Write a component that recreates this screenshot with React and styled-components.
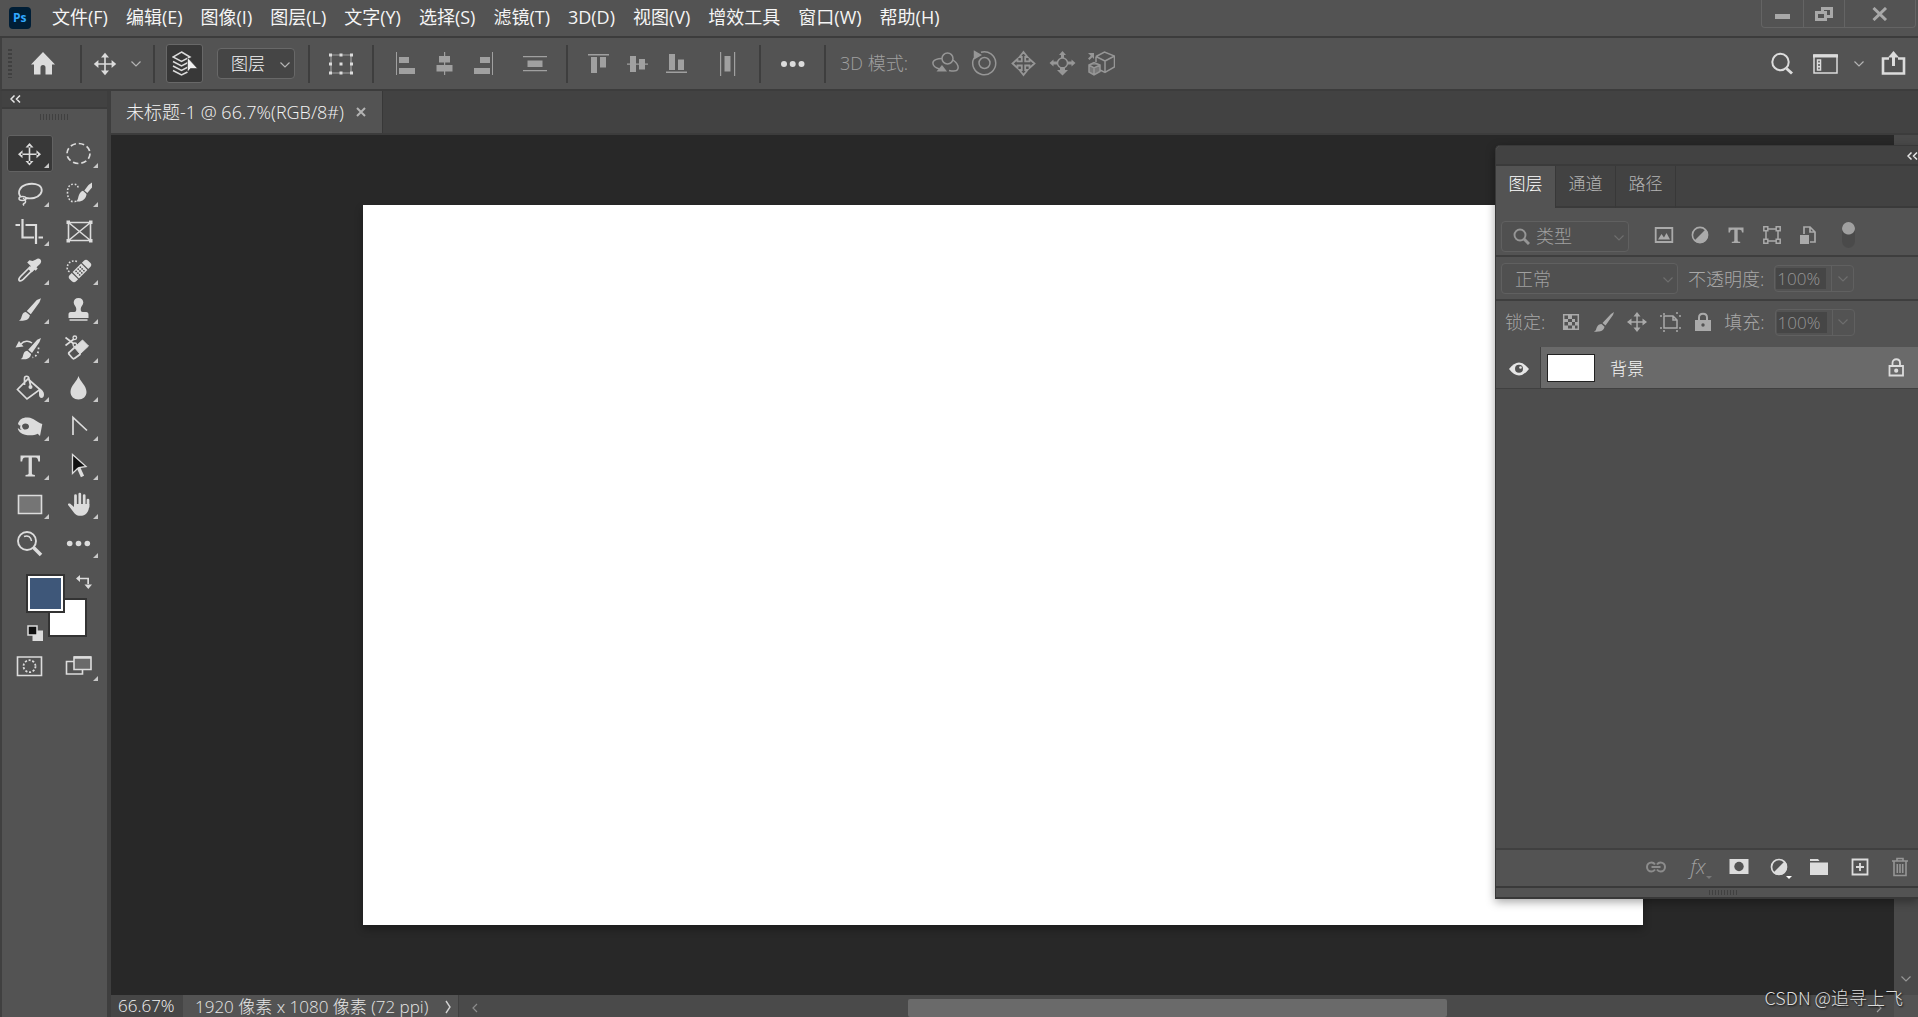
import React from 'react';
import styled, { createGlobalStyle } from 'styled-components';

const sans = `'Open Sans', 'Noto Sans CJK SC', sans-serif`;

const menus = ['文件(F)', '编辑(E)', '图像(I)', '图层(L)', '文字(Y)', '选择(S)', '滤镜(T)', '3D(D)', '视图(V)', '增效工具', '窗口(W)', '帮助(H)'];

const Chevron = ({ color = '#b4b4b4' }) => (
    <svg width="10" height="6" viewBox="0 0 10 6" fill="none" stroke={color} strokeWidth="1.2"><path d="M.5.5 5 5 9.5.5" /></svg>
);

const DoubleChevron = () => (
    <svg width="11" height="8" viewBox="0 0 11 8" fill="none" stroke="#e6e6e6" strokeWidth="1.5"><path d="M4.5.5 1 4l3.500 3.500M10 .5 6.500 4 10 7.500" /></svg>
);

const MoveIcon = ({ size = 24, color = '#dcdcdc' }) => (
    <svg width={size} height={size} viewBox="0 0 24 24" fill={color}>
        <path d="M11.200 3h1.600v18h-1.600zM3 11.200h18v1.600H3z" />
        <path d="M12 .8 16 5.400H8zM12 23.200 8 18.600h8zM.8 12 5.400 8v8zM23.200 12 18.600 16V8z" />
    </svg>
);

/* tool drawings, each on a 46 x 37 button */
const tools = [
    { name: '移动工具', active: true, more: true, art: <path d="M21.700 11v17h1.600V11zM14 18.500v1.600h17v-1.600zM22.500 8l4 4.500h-8zM22.500 30.500l-4-4.500h8zM11 19.300l4.500-4v8zM34 19.300l-4.500 4v-8z" fill="#dcdcdc" /> },
    { name: '椭圆选框工具', more: true, art: <ellipse cx="22.500" cy="18.500" rx="11.500" ry="10" strokeDasharray="5.500 2.950" strokeWidth="1.700" /> },
    { name: '套索工具', more: true, art: <><path d="M13.500 22.500c-3.500-4.500-.5-10 5.500-11.800 6.500-2 13.500-.7 15.300 3.300 1.700 4.300-1.800 8.800-7.300 10-3 .7-6 .5-8.500 0" strokeWidth="1.800" /><ellipse cx="15.500" cy="24.500" rx="3.500" ry="2" strokeWidth="1.500" /><path d="M16 24c3 2 3.500 4.500 1 5.500-1 .5-1 1 0 2" strokeWidth="1.500" /></> },
    { name: '快速选择工具', more: true, art: <><path d="M22 13.500c0-2-1.500-3.300-4.500-3.300-4 0-6 3-6 8s2 9.500 6 9.500c1.500 0 2.500-.3 3-.8" strokeWidth="1.600" strokeDasharray="1.700 1.700" /><path d="M36 8.500v5L31.300 19l-3-2.600 4.200-5.400zM27 16.800l3.500 3.200c-.3 5-4.500 7.700-8.500 7.500-1 0-1.500 0-2-.5 2.300-.7 1.800-3 3-6 .8-2.200 2.200-3.700 4-4.200z" fill="#dcdcdc" stroke="none" /></> },
    { name: '裁剪工具', more: true, art: <><path d="M15.500 6v18.500H27M8.500 12h4.500M18.500 12H29v19M31.500 24.500h4.500" strokeWidth="2.200" /></> },
    { name: '图框工具', art: <><path d="M12.500 9.500h22v18h-22zM12.500 9.500l22 18M34.500 9.500l-22 18" strokeWidth="1.600" /><path d="M10.500 7.500h3.500V11h-3.500zM33 7.500h3.500V11H33zM10.500 26h3.500v3.500h-3.500zM33 26h3.500v3.500H33z" fill="#dcdcdc" stroke="none" /></> },
    { name: '吸管工具', more: true, art: <><path d="M23.500 14.500l-10 10c-1.800 2-2.200 2.800-1.300 4 1.300 1 2.200.5 4-1.200l10-10" strokeWidth="1.700" /><path d="M29 7.500c2-1.800 4.500-.8 5 1 .4 1.300-.1 2.500-1 3.500l-3.500 3.200 1.200 1.200-2 2.300-1.200-1-2.800 2.800-3.500-3.500 2.800-2.700-3.800-3.800 2.200-2.200 3.200.8z" fill="#dcdcdc" stroke="none" /></> },
    { name: '污点修复画笔工具', more: true, art: <><path d="M21 9.500c-6-2-11 2-9.500 9l2.500 1.500" strokeWidth="1.600" strokeDasharray="1.700 1.700" /><g transform="rotate(-45 24 19)" fill="#dcdcdc" stroke="none"><path d="M14 14.500h2.800v9H14q-3 0-3-3v-3q0-3 3-3zM31.200 14.500H34q3 0 3 3v3q0 3-3 3h-2.800zM18 14.500h12v9H18z" /><g fill="#535353"><circle cx="21" cy="16.500" r=".9" /><circle cx="24" cy="16.500" r=".9" /><circle cx="27" cy="16.500" r=".9" /><circle cx="21" cy="19" r=".9" /><circle cx="24" cy="19" r=".9" /><circle cx="27" cy="19" r=".9" /><circle cx="21" cy="21.500" r=".9" /><circle cx="24" cy="21.500" r=".9" /><circle cx="27" cy="21.500" r=".9" /></g></g></> },
    { name: '画笔工具', more: true, art: <path d="M34 7.300l-1.500 4-8.700 12-4-3.300 10-11zM18.900 21l4 3.300c-.5 4-3.900 5.200-7 5.400-1.500.1-3 .1-4.100-.2 2.500-1 2.200-2.500 3.300-5.300.7-2 2.200-3.200 3.800-3.200z" fill="#dcdcdc" stroke="none" /> },
    { name: '仿制图章工具', more: true, art: <><path d="M22.500 7c3 0 4.800 2 4.800 4.500 0 2.800-2.600 4-2.600 6.500 0 2 .5 3 2 3h3.500c1.500 0 2.300 1 2.300 2.500V27h-20v-3.500c0-1.500.8-2.500 2.300-2.500h3.500c1.500 0 2-1 2-3 0-2.500-2.600-3.700-2.600-6.500C17.700 9 19.500 7 22.500 7zM13.500 28.200h18v1.600h-18z" fill="#dcdcdc" stroke="none" /></> },
    { name: '历史记录画笔工具', more: true, art: <><path d="M34 8l-1.500 4-7.500 11-3.800-3.300 9-10zM20.300 20.700l3.800 3.300c-.5 4-3.500 5-6.500 5.300-1.500.1-3 .1-4.100-.2 2.500-1 2-2.500 3-5.200.7-2 2.200-3.200 3.800-3.200z" fill="#dcdcdc" stroke="none" /><path d="M14 14c3-3.500 8-3.500 11-1" strokeWidth="1.600" /><path d="M8.500 17.500l3.500-6.500 4.500 5.500z" fill="#dcdcdc" stroke="none" /><path d="M31.500 17.500c.5 4-1.500 9-6 10" strokeWidth="1.700" strokeDasharray="1.700 2.300" /></> },
    { name: '橡皮擦工具', more: true, art: <><path d="M9.500 7.500l8.500 6.500M9.500 15.500l8.500-6.500" strokeWidth="1.600" /><circle cx="18.800" cy="7.800" r="1.800" strokeWidth="1.300" /><circle cx="18.800" cy="14.800" r="1.800" strokeWidth="1.300" /><path d="M26.500 10l6 6-8.500 8-5.500-6.500z" fill="#dcdcdc" strokeLinejoin="round" /><path d="M18.500 17.500l-5.200 4.800c-.8.7-.8 1.400 0 2.200l3 3.500c.8.900 1.700 1 2.500.2l5.700-4.200" strokeWidth="1.800" /></> },
    { name: '油漆桶工具', more: true, art: <><path d="M21 10l12 10.500L20 30 10.500 20.500zM17.500 16V9.500c0-3 4-3 4.500 0l1.500 7" strokeWidth="1.700" /><circle cx="23.500" cy="18" r="2" fill="#dcdcdc" stroke="none" /><path d="M32 19.500c2.500.5 5 3 5 6 0 2-1 3.500-2.500 3.500S32 27.500 32 25.500z" fill="#dcdcdc" stroke="none" /></> },
    { name: '模糊工具', more: true, art: <path d="M22.500 7c1.500 5.500 8 9.500 8 16 0 4.500-3.500 7.500-8 7.500s-8-3-8-7.500c0-6.500 6.500-10.500 8-16z" fill="#dcdcdc" stroke="none" /> },
    { name: '海绵工具', more: true, art: <path d="M11 15.500c1.500-4.500 5.500-6.500 10-6 6 .5 8.500 4.500 14.300 6.500L33 28l-2.300-2.300c-3.700 2-8.700 2-12.700 1-4-.8-7-3.500-7.200-6.700 1.200 1.200 2.500 2 4.200 2-2.200-1-2.200-2.500-1.500-4.500-1 .2-2-.5-2.500-2zM18.300 15.500c-1.800 0-3 1-3.300 2.500.3 2.500 1.700 3.600 3.500 3.600s3.500-1.300 3.500-3.100c0-1.800-1.500-3-3.700-3z" fill="#dcdcdc" fillRule="evenodd" stroke="none" /> },
    { name: '钢笔工具', more: true, art: <path d="M17 27V9.500l14 13" strokeWidth="1.700" /> },
    { name: '文字工具', more: true, art: <path d="M13.500 8.500h19.500v6h-1.700c-.3-2.900-1-4-3-4h-3.400v15.700c0 1.200.6 1.700 3 1.700v1.600H18.500v-1.600c2.500 0 3.100-.5 3.100-1.700V10.500h-3.400c-2 0-2.700 1.100-3 4h-1.700z" fill="#dcdcdc" stroke="none" /> },
    { name: '选择工具', more: true, art: <><path d="M22 19.500l4.500 10" strokeWidth="3.500" /><path d="M16.500 7.500v19l5-5 1.500-1 7-1z" fill="#111" strokeWidth="1.300" /></> },
    { name: '矩形工具', more: true, art: <path d="M11.500 9.500h23v18h-23z" fill="#757575" strokeWidth="1.600" /> },
    { name: '抓手工具', more: true, art: <><path d="M19.500 9.500v10M23.800 8v11M28.200 9.500v10M32 14v7" strokeWidth="2.700" strokeLinecap="round" /><path d="M18 18h15.300c0 6-1.800 11.800-9 11.800-4 0-6-2.300-8-5.300l-4-5.200c-1-1.500.6-2.400 2-1.500l3.700 3.200z" fill="#dcdcdc" stroke="none" /></> },
    { name: '缩放工具', art: <><circle cx="20" cy="16" r="9" strokeWidth="1.900" /><path d="M26.500 22.500l7.500 7.500" strokeWidth="3.500" /><path d="M17 11.500c4-1.500 7 .5 7.500 4.500" strokeWidth="1.500" /></> },
    { name: '编辑工具栏', more: true, art: <g fill="#dcdcdc" stroke="none"><circle cx="13.700" cy="18.500" r="2.800" /><circle cx="22.500" cy="18.500" r="2.800" /><circle cx="31.300" cy="18.500" r="2.800" /></g> },
];

const viewTools = [
    { name: '快速蒙版', art: <><path d="M10.500 9h24v18.500h-24z" strokeWidth="1.600" /><circle cx="22.500" cy="18.200" r="6" strokeWidth="1.800" strokeDasharray="2.100 1.700" /></> },
    { name: '屏幕模式', more: true, art: <><path d="M10.500 13.500h16v12.500h-16z" strokeWidth="1.600" /><path d="M18 9h17v12.500H18z" fill="#6a6a6a" strokeWidth="1.600" /><path d="M18 9.500h17" strokeWidth="2.500" /></> },
];

function ToolButton({ tool }) {
    return (
        <Tool type="button" aria-label={tool.name} $active={tool.active}>
            <svg width="46" height="37" viewBox="0 0 46 37" fill="none" stroke="#dcdcdc">
                <g stroke={tool.active ? 'none' : '#dcdcdc'}>{tool.art}</g>
                {tool.more && <path d="M42 28v5h-5z" fill="#c8c8c8" stroke="none" />}
            </svg>
        </Tool>
    );
}

const alignIcons = [
    { name: '左对齐', art: <path d="M2 0h1v23H2zM5 5h10v6H5zM5 16h16v6H5z" /> },
    { name: '水平居中对齐', art: <path d="M11 0h1.200v23H11zM6 4h11v6.500H6zM3.500 13h16v6.500h-16z" /> },
    { name: '右对齐', art: <path d="M20 0h1v23h-1zM8 5h10v6H8zM2 16h16v6H2z" /> },
    { name: '垂直分布', last: true, art: <path d="M0 4h24v1.300H0zM0 18h24v1.300H0zM4.500 8.500h15v6.500h-15z" /> },
];

const topIcons = [
    { name: '顶对齐', art: <path d="M1 2h21v1.500H1zM4 5h6v16H4zM13 5h6v10.500h-6z" /> },
    { name: '垂直居中对齐', art: <path d="M1 11.500h21v1.200H1zM4 4h6v16H4zM13 7h6v10.500h-6z" /> },
    { name: '底对齐', art: <path d="M1 19.500h21V21H1zM4 2h6v16H4zM13 7.500h6V18h-6z" /> },
    { name: '水平分布', last: true, art: <path d="M4 0h1.200v24H4zM18 0h1.200v24H18zM8.500 4h6v15.500h-6z" /> },
];

const modeIcons = [
    { name: '环绕移动 3D 相机', art: <><circle cx="15.500" cy="8.500" r="5.500" /><path d="M10 8.500C5.500 8.500.8 10 .9 13c.1 3 3 5 6.500 6M21 10c4 3 6 6.500 4.700 9.300-1 2.200-5 2-8.700 1.200" /><path d="M4.500 21.500 10 15l5 6.500z" fill="#969696" stroke="none" /></> },
    { name: '滚动 3D 相机', art: <><circle cx="13.500" cy="13" r="5.500" /><path d="M10 2.200a11.500 11.500 0 1 1-7 5.800" /><path d="M3.500 1.500v7l6-3.500z" fill="#969696" /></> },
    { name: '平移 3D 相机', art: <path d="M13.500 2l4 5h-2.300v4.300h4.300V9l5 4.500-5 4.500v-2.500h-4.300v4.500h2.300l-4 5-4-5h2.300v-4.500H7.500V18l-5-4.500 5-4.500v2.300h4.300V7H9.500z" strokeWidth="1.800" /> },
    { name: '滑动 3D 相机', art: <><circle cx="13.500" cy="13" r="5" /><path d="M13.500 1l3.500 4h-2v3h-3V5h-2zM13.500 25.500 8 20h3v-3h5v3h3zM.5 13l4-3.500v2h4.500v3H4.500v2zM26.500 13l-4-3.500v2H18v3h4.500v2z" fill="#969696" stroke="none" /></> },
    { name: '变焦 3D 相机', art: <><path d="M8 6.500 16.500 2l10 4v11l-9.500 5.500L12 20M8 6.500 17 11v11.500M17 11l9.500-5M8 6.500V12" /><path d="M1 15l5-2.500 6 2.500v6.500L6 25l-5-3zM1 15l5 3 6-3M6 18v7" fill="#787878" /><path d="M0 3h6v6L4.300 7.300 1.500 10 0 8.500l2.800-2.800z" fill="#969696" stroke="none" /></> },
];

const filterIcons = [
    { name: '像素图层', art: <><path d="M1.700 3h16.600v14H1.700z" strokeWidth="1.800" /><path d="M4 14.500 7.500 9l2.500 3.500L12.500 8l3.500 6.500z" fill="#aaa" stroke="none" /></> },
    { name: '调整图层', art: <><circle cx="10" cy="10" r="7.600" strokeWidth="1.600" /><path d="M15.700 4.300A8 8 0 0 1 4.300 15.700z" fill="#aaa" stroke="none" /></> },
    { name: '文字图层', art: <path d="M2.500 2.500h15v5H16c-.2-2-.8-2.700-2.500-2.700h-1.800v10.400c0 1.300.5 1.600 2.500 1.600V18H5.800v-1.200c2 0 2.500-.3 2.500-1.600V4.800H6.500C4.800 4.800 4.200 5.500 4 7.500H2.500z" fill="#aaa" stroke="none" /> },
    { name: '形状图层', art: <path d="M4 6v8M16 6v8M6 4h8M6 16h8M1.800 1.800h4v4h-4zM14.200 1.800h4v4h-4zM1.800 14.200h4v4h-4zM14.200 14.200h4v4h-4z" strokeWidth="1.500" /> },
    { name: '智能对象', art: <><path d="M6 9V2h6l5 5v10h-5M12 2v5h5" strokeWidth="1.700" /><path d="M2 10h9v9H2z" fill="#aaa" stroke="none" /></> },
];

const lockIcons = [
    { name: '锁定透明像素', art: <><path d="M2.700 2.700h14.600v14.600H2.700z" strokeWidth="1.500" /><path d="M7 3h4v4H7zM3 7h4v3H3zM11 7h3v3h-3zM7 10h4v3.500H7zM14 10h3v3.500h-3zM3 13.500h4V17H3zM11 13.500h3V17h-3z" fill="#aaa" stroke="none" /></> },
    { name: '锁定图像像素', art: <path d="M20 0l-1 3-7.500 10.500-3-2.500L17 2zM7.500 12l3 2.700C10 18 7 19.500 4 19.500c-1.500.2-2.500.3-4 0 2.500-1 1.800-2 3-4.500.8-2 2.500-3 4.500-3z" fill="#aaa" stroke="none" /> },
    { name: '锁定位置', art: <path d="M9.300 2h1.500v16H9.300zM2 9.300h16v1.500H2zM10 0l3.500 4.500h-7zM10 20l-3.500-4.500h7zM0 10l4.500-3.500v7zM20 10l-4.500 3.500v-7z" fill="#aaa" stroke="none" /> },
    { name: '防止自动嵌套', art: <path d="M4 1v2M0 4h2M4 4h9l4 4v8H4zM13 4v4h4M17 0v2M19 4h2M4 18v2M0 16h2M17 18v2M19 16h2" strokeWidth="1.500" /> },
    { name: '全部锁定', art: <><path d="M6 9V5.500C6 .5 14 .5 14 5.500V9" strokeWidth="2" /><path d="M2 8h16v11H2z" fill="#aaa" stroke="none" /><circle cx="10" cy="13" r="1.700" fill="#535353" stroke="none" /></> },
];

function App() {
    return (
        <>
            <GlobalStyle />
            <Window>
                <TitleBar>
                    <Logo viewBox="0 0 22 22" role="img" aria-label="Photoshop">
                        <rect width="22" height="22" rx="4" fill="#001e36" />
                        <text x="4" y="15" fontSize="12" fontWeight="700" fontFamily="Open Sans, sans-serif" fill="#31a8ff">Ps</text>
                    </Logo>
                    <MenuBar>
                        {menus.map((menu) => <MenuItem key={menu} type="button">{menu}</MenuItem>)}
                    </MenuBar>
                    <WindowButtons>
                        <WindowButton type="button" aria-label="最小化" $width={41}>
                            <svg width="16" height="16"><path d="M0 8h15v5H0z" fill="#a8a8a8" /></svg>
                        </WindowButton>
                        <WindowButton type="button" aria-label="还原" $width={41}>
                            <svg width="18" height="16" fill="none" stroke="#a8a8a8" strokeWidth="3"><path d="M7.500 5V2.500h9v8H12" /><path d="M1.500 6.500h9v7h-9z" /></svg>
                        </WindowButton>
                        <WindowButton type="button" aria-label="关闭" $width={71}>
                            <svg width="16" height="14" fill="none" stroke="#a8a8a8" strokeWidth="3"><path d="M1.500 1l12.500 12M14 1 1.500 13" /></svg>
                        </WindowButton>
                    </WindowButtons>
                </TitleBar>

                <OptionsBar>
                    <HomeGroup>
                        <BarGrip />
                        <PlainButton type="button" aria-label="主页">
                            <svg width="24" height="24" fill="#dcdcdc"><path d="M12 0 24 12.500h-3V22.500h-6.500v-7a2 2 0 0 0-5 0v7H3v-10H0z" /></svg>
                        </PlainButton>
                    </HomeGroup>
                    <Group $left={11} $right={12} $gap={14}>
                        <PlainButton type="button" aria-label="移动工具"><MoveIcon /></PlainButton>
                        <PlainButton type="button" aria-label="工具预设"><Chevron /></PlainButton>
                    </Group>
                    <Group $left={11} $right={13} $gap={14}>
                        <AutoSelect type="button" aria-label="自动选择">
                            <svg width="26" height="28" fill="none" stroke="#dcdcdc" strokeWidth="1.500">
                                <path d="M9.500 2 18 7l-8.500 4.500L1 7zM1 11.500l8.500 4.500 8.500-4.500M1 16l8.500 4.500L18 16M1 20.500 9.500 25l6-3" />
                                <path d="M15.500 7.500v14.500l3-3.500h7z" fill="#f0f0f0" stroke="#383838" strokeWidth=".6" />
                            </svg>
                        </AutoSelect>
                        <SelectWrap $width={78}>
                            <Select aria-label="自动选择目标" $bright><option>图层</option></Select>
                            <Arrow><Chevron /></Arrow>
                        </SelectWrap>
                    </Group>
                    <Group $left={18} $right={18}>
                        <PlainButton type="button" aria-label="显示变换控件">
                            <svg width="26" height="24" fill="#dcdcdc">
                                <path d="M3 3h20v18H3z" fill="none" stroke="#a0a0a0" strokeWidth="1.200" />
                                <path d="M1 1.500h3v3H1zM11.500 1.500h3v3h-3zM22 1.500h3v3h-3zM1 10.500h3v3H1zM11.500 10.500h3v3h-3zM22 10.500h3v3h-3zM1 19.500h3v3H1zM11.500 19.500h3v3h-3zM22 19.500h3v3h-3z" />
                            </svg>
                        </PlainButton>
                    </Group>
                    <Group $left={20} $right={19} $gap={15}>
                        {alignIcons.map((icon) => (
                            <AlignButton key={icon.name} type="button" aria-label={icon.name} $last={icon.last}>
                                <svg width="24" height="24" fill="#a0a0a0">{icon.art}</svg>
                            </AlignButton>
                        ))}
                    </Group>
                    <Group $left={19} $right={19} $gap={15}>
                        {topIcons.map((icon) => (
                            <AlignButton key={icon.name} type="button" aria-label={icon.name} $last={icon.last}>
                                <svg width="24" height="24" fill="#a0a0a0">{icon.art}</svg>
                            </AlignButton>
                        ))}
                    </Group>
                    <Group $left={19} $right={18}>
                        <PlainButton type="button" aria-label="更多对齐选项">
                            <svg width="26" height="24" fill="#dcdcdc"><circle cx="4" cy="12" r="3" /><circle cx="12.700" cy="12" r="3" /><circle cx="21.500" cy="12" r="3" /></svg>
                        </PlainButton>
                    </Group>
                    <Group $left={14} $right={0} $gap={12}>
                        <ModeLabel>3D 模式:</ModeLabel>
                        {modeIcons.map((icon) => (
                            <PlainButton key={icon.name} type="button" aria-label={icon.name}>
                                <svg width="27" height="27" fill="none" stroke="#969696" strokeWidth="1.500">{icon.art}</svg>
                            </PlainButton>
                        ))}
                    </Group>
                    <RightGroup>
                        <PlainButton type="button" aria-label="搜索">
                            <svg width="22" height="24" fill="none" stroke="#dcdcdc"><circle cx="9.500" cy="10" r="8.200" strokeWidth="2" /><path d="M15.500 16.500l5.500 5" strokeWidth="3" /></svg>
                        </PlainButton>
                        <WorkspaceButton type="button" aria-label="选择工作区">
                            <svg width="26" height="24" fill="none" stroke="#dcdcdc"><path d="M1 3h23v18H1z" strokeWidth="1.500" /><path d="M0 4h25" strokeWidth="3" /><path d="M4.500 8h3v10h-3zM4.500 11.300h3M4.500 14.700h3" strokeWidth="1.500" /></svg>
                            <Chevron />
                        </WorkspaceButton>
                        <PlainButton type="button" aria-label="共享">
                            <svg width="26" height="26" fill="none" stroke="#dcdcdc"><path d="M8 7.500H2v15h21v-15H17" strokeWidth="2.600" /><path d="M12.500 5v10" strokeWidth="3" /><path d="M12.500 0 18 6.500H7z" fill="#dcdcdc" stroke="none" /></svg>
                        </PlainButton>
                    </RightGroup>
                </OptionsBar>

                <Body>
                    <Palette>
                        <PaletteHeader><PlainButton type="button" aria-label="折叠"><DoubleChevron /></PlainButton></PaletteHeader>
                        <PaletteGrip><Ticks $height={6} /></PaletteGrip>
                        <ToolGrid>
                            {tools.map((tool) => <ToolButton key={tool.name} tool={tool} />)}
                        </ToolGrid>
                        <Swatches>
                            <Swatch type="button" aria-label="背景色" $x={39} $y={36} $color="#fff" />
                            <Swatch type="button" aria-label="前景色" $x={17} $y={12} $color="#3e5779" $ring />
                            <SwatchIcon type="button" aria-label="切换颜色" $x={67} $y={12}>
                                <svg width="17" height="16" fill="#dcdcdc"><path d="M4 3.700h9V10h-1.700V5.300H4z" /><path d="M0 4.500 4 1v7zM8.500 10.500h7.500l-3.700 4.500z" /></svg>
                            </SwatchIcon>
                            <SwatchIcon type="button" aria-label="默认颜色" $x={18} $y={63}>
                                <svg width="17" height="17"><path d="M5.500 5.500H16V16H5.500z" fill="#dcdcdc" /><path d="M1 1h9v9H1z" fill="#111" stroke="#dcdcdc" strokeWidth="1.500" /></svg>
                            </SwatchIcon>
                        </Swatches>
                        <ToolGrid>
                            {viewTools.map((tool) => <ToolButton key={tool.name} tool={tool} />)}
                        </ToolGrid>
                    </Palette>

                    <Document>
                        <TabBar>
                            <DocumentTab>
                                <span>未标题-1 @ 66.7%(RGB/8#)</span>
                                <PlainButton type="button" aria-label="关闭文档">
                                    <svg width="10" height="12" fill="none" stroke="#b4b4b4" strokeWidth="2"><path d="M1 3l8 8M9 3 1 11" /></svg>
                                </PlainButton>
                            </DocumentTab>
                        </TabBar>
                        <Viewport>
                            <Stage><Artboard /></Stage>
                            <VerticalScroll><Chevron color="#969696" /></VerticalScroll>
                        </Viewport>
                        <StatusBar>
                            <Zoom aria-label="缩放" defaultValue="66.67%" />
                            <DocumentInfo>
                                <span>1920 像素 x 1080 像素 (72 ppi)</span>
                                <svg width="6" height="14" fill="none" stroke="#d2d2d2" strokeWidth="1.400"><path d="M1 1l4 6-4 6" /></svg>
                            </DocumentInfo>
                            <ScrollTrack>
                                <svg width="6" height="10" fill="none" stroke="#8c8c8c" strokeWidth="1.200"><path d="M5 1 1 5l4 4" /></svg>
                                <ScrollSpace />
                                <ScrollThumb />
                                <ScrollSpace />
                                <svg width="6" height="10" fill="none" stroke="#a0a0a0" strokeWidth="1.200"><path d="M1 1l4 4-4 4" /></svg>
                            </ScrollTrack>
                            <ScrollCorner />
                        </StatusBar>
                    </Document>
                </Body>

                <LayersPanel>
                    <PanelHeader><PlainButton type="button" aria-label="折叠面板"><DoubleChevron /></PlainButton></PanelHeader>
                    <PanelTabs>
                        <PanelTab type="button" $active>图层</PanelTab>
                        <PanelTab type="button">通道</PanelTab>
                        <PanelTab type="button">路径</PanelTab>
                    </PanelTabs>
                    <FilterRow>
                        <SelectWrap $width={128}>
                            <SearchMark>
                                <svg width="17" height="17" fill="none" stroke="#969696"><circle cx="7" cy="7" r="5.500" strokeWidth="1.900" /><path d="M11 11l5 5" strokeWidth="3" /></svg>
                            </SearchMark>
                            <Select aria-label="图层过滤" $left={34}><option>类型</option></Select>
                            <Arrow><Chevron color="#6e6e6e" /></Arrow>
                        </SelectWrap>
                        <FilterIcons>
                            {filterIcons.map((icon) => (
                                <PlainButton key={icon.name} type="button" aria-label={icon.name}>
                                    <svg width="20" height="20" fill="none" stroke="#aaa">{icon.art}</svg>
                                </PlainButton>
                            ))}
                        </FilterIcons>
                        <FilterSwitch type="button" aria-label="打开过滤" />
                    </FilterRow>
                    <BlendRow>
                        <SelectWrap $width={177}>
                            <Select aria-label="混合模式"><option>正常</option></Select>
                            <Arrow><Chevron color="#6e6e6e" /></Arrow>
                        </SelectWrap>
                        <FieldLabel htmlFor="opacity">不透明度:</FieldLabel>
                        <Percent>
                            <PercentInput id="opacity" defaultValue="100%" />
                            <PercentArrow type="button" aria-label="调整不透明度"><Chevron color="#6e6e6e" /></PercentArrow>
                        </Percent>
                    </BlendRow>
                    <LockRow>
                        <FieldLabel as="span">锁定:</FieldLabel>
                        <LockIcons>
                            {lockIcons.map((icon) => (
                                <PlainButton key={icon.name} type="button" aria-label={icon.name}>
                                    <svg width="21" height="21" fill="none" stroke="#aaa">{icon.art}</svg>
                                </PlainButton>
                            ))}
                        </LockIcons>
                        <FieldLabel htmlFor="fill">填充:</FieldLabel>
                        <Percent>
                            <PercentInput id="fill" defaultValue="100%" />
                            <PercentArrow type="button" aria-label="调整填充"><Chevron color="#6e6e6e" /></PercentArrow>
                        </Percent>
                    </LockRow>
                    <LayerList>
                        <LayerRow>
                            <Visibility type="button" aria-label="图层可见性">
                                <svg width="20" height="14"><path d="M0 7Q10-6 20 7 10 20 0 7z" fill="#e6e6e6" /><circle cx="10" cy="6.800" r="4" fill="#535353" /><circle cx="11.500" cy="5.500" r="1.300" fill="#e6e6e6" /></svg>
                            </Visibility>
                            <LayerBody>
                                <Thumbnail />
                                <LayerName>背景</LayerName>
                                <svg width="17" height="19" fill="none" stroke="#dcdcdc" strokeWidth="1.800"><path d="M1.500 8h13.500v9.500H1.500zM4.500 8V5c0-5 7.500-5 7.500 0v3" /><circle cx="8.200" cy="12.700" r="1.200" fill="#dcdcdc" /></svg>
                            </LayerBody>
                        </LayerRow>
                    </LayerList>
                    <PanelFooter>
                        <PlainButton type="button" aria-label="链接图层">
                            <svg width="22" height="20" fill="none" stroke="#8c8c8c" strokeWidth="2"><path d="M10 7.500C9 6 7.800 5.500 6.500 5.500a4.500 4.500 0 0 0 0 9c1.300 0 2.500-.5 3.500-2M12 7.500c1-1.500 2.200-2 3.500-2a4.500 4.500 0 0 1 0 9c-1.300 0-2.500-.5-3.500-2M6.500 10h9" /></svg>
                        </PlainButton>
                        <EffectButton type="button" aria-label="添加图层样式"><i>fx</i><CaretMark $color="#787878" /></EffectButton>
                        <PlainButton type="button" aria-label="添加蒙版">
                            <svg width="20" height="16"><path d="M.5 0h19v15H.5z" fill="#dcdcdc" /><circle cx="10" cy="7.500" r="4.700" fill="#535353" /></svg>
                        </PlainButton>
                        <MarkedButton type="button" aria-label="新建填充或调整图层">
                            <svg width="18" height="20"><circle cx="9" cy="10" r="7.500" fill="none" stroke="#dcdcdc" strokeWidth="1.700" /><path d="M14.700 4.300A8 8 0 0 1 3.300 15.700z" fill="#dcdcdc" /></svg>
                            <CaretMark $color="#fff" />
                        </MarkedButton>
                        <PlainButton type="button" aria-label="新建组">
                            <svg width="20" height="17" fill="#dcdcdc"><path d="M1 0h8l1.500 2H1zM1 3.500h18V16H1z" /></svg>
                        </PlainButton>
                        <PlainButton type="button" aria-label="新建图层">
                            <svg width="20" height="20" fill="none" stroke="#dcdcdc"><path d="M2.500 2.500h15v15h-15z" strokeWidth="1.800" /><path d="M10 6v8M6 10h8" strokeWidth="1.800" /></svg>
                        </PlainButton>
                        <PlainButton type="button" aria-label="删除图层">
                            <svg width="18" height="20" fill="none" stroke="#969696" strokeWidth="1.600"><path d="M1 4h16M6 4V1.500h6V4M3 4v14.500h12V4M6.300 7v9M9 7v9M11.700 7v9" /></svg>
                        </PlainButton>
                    </PanelFooter>
                    <PanelGrip><Ticks $height={5} /></PanelGrip>
                </LayersPanel>
                <Watermark>CSDN @追寻上飞</Watermark>
            </Window>
        </>
    );
}

const GlobalStyle = createGlobalStyle`
    * {
        box-sizing: border-box;
    }
    body {
        margin: 0;
        overflow: hidden;
        background: #535353;
        color: #f5f5f5;
        font-family: ${sans};
        font-weight: 300;
    }
    button, input, select {
        font-family: inherit;
        font-weight: inherit;
        color: inherit;
    }
    svg {
        display: block;
        flex: none;
    }
`;

const Window = styled.div`
    position: relative;
    display: flex;
    flex-direction: column;
    height: 100vh;
`;

const TitleBar = styled.header`
    display: flex;
    flex: none;
    height: 38px;
    padding-left: 9px;
    border-bottom: 2px solid #3c3c3c;
`;

const Logo = styled.svg`
    width: 22px;
    height: 22px;
    margin: 7px 12px 0px 0px;
`;

const MenuBar = styled.nav`
    display: flex;
    align-items: center;
    height: 34px;
`;

const MenuItem = styled.button`
    border: none;
    background: none;
    padding: 0px 9px;
    font-size: 18px;
    font-weight: 400;
    line-height: 26px;
    white-space: nowrap;
`;

const WindowButtons = styled.div`
    display: flex;
    height: 28px;
    margin: 0px 2px 0px auto;
    border: 1px solid #646464;
    border-top: none;
    border-radius: 0px 0px 4px 4px;
`;

const WindowButton = styled.button`
    display: flex;
    align-items: center;
    justify-content: center;
    width: ${(props) => props.$width}px;
    padding: 0px;
    border: none;
    background: none;
    & + & {
        border-left: 1px solid #646464;
    }
`;

const OptionsBar = styled.div`
    display: flex;
    flex: none;
    align-items: center;
    height: 53px;
    border-bottom: 2px solid #3c3c3c;
    border-left: 2px solid #404040;
`;

const Group = styled.div`
    display: flex;
    align-items: center;
    gap: ${(props) => props.$gap || 0}px;
    height: 38px;
    padding: 0px ${(props) => props.$right}px 0px ${(props) => props.$left}px;
    border-left: 2px solid #3e3e3e;
`;

const HomeGroup = styled.div`
    display: flex;
    align-items: center;
    gap: 19px;
    padding: 0px 25px 0px 6px;
`;

const RightGroup = styled.div`
    display: flex;
    align-items: center;
    gap: 20px;
    margin-left: auto;
    padding-right: 11px;
`;

const BarGrip = styled.div`
    width: 4px;
    height: 29px;
    background: repeating-linear-gradient(#404040 0 2px, transparent 2px 4px);
`;

const PlainButton = styled.button`
    display: flex;
    align-items: center;
    justify-content: center;
    flex: none;
    padding: 0px;
    border: none;
    background: none;
`;

const AlignButton = styled(PlainButton)`
    margin-left: ${(props) => (props.$last ? 12 : 0)}px;
`;

const WorkspaceButton = styled(PlainButton)`
    gap: 15px;
    margin-right: -3px;
`;

const AutoSelect = styled(PlainButton)`
    width: 37px;
    height: 39px;
    background: #383838;
    border: 1px solid #686868;
    border-radius: 3px;
`;

const ModeLabel = styled.span`
    margin-right: 12px;
    padding-bottom: 3px;
    color: #a0a0a0;
    font-size: 18px;
    white-space: nowrap;
`;

const SelectWrap = styled.div`
    position: relative;
    flex: none;
    width: ${(props) => props.$width}px;
    height: 31px;
`;

const Select = styled.select`
    appearance: none;
    width: 100%;
    height: 100%;
    padding: 0px 0px 0px ${(props) => props.$left || 13}px;
    border: 1px solid ${(props) => (props.$bright ? '#686868' : '#606060')};
    border-radius: 4px;
    background: ${(props) => (props.$bright ? '#454545' : '#505050')};
    color: ${(props) => (props.$bright ? '#f5f5f5' : '#a0a0a0')};
    font-size: ${(props) => (props.$bright ? 17 : 18)}px;
`;

const Arrow = styled.span`
    position: absolute;
    right: 5px;
    top: 14px;
    pointer-events: none;
`;

const Body = styled.div`
    display: flex;
    flex: 1;
    min-height: 0;
`;

const Palette = styled.aside`
    display: flex;
    flex-direction: column;
    flex: none;
    width: 111px;
    border-left: 2px solid #404040;
    border-right: 4px solid #3e3e3e;
`;

const PaletteHeader = styled.div`
    display: flex;
    align-items: center;
    height: 18px;
    padding-left: 8px;
    background: #424242;
    border-bottom: 2px solid #3c3c3c;
`;

const PaletteGrip = styled.div`
    display: flex;
    justify-content: center;
    height: 26px;
    padding-top: 5px;
`;

const Ticks = styled.div`
    width: 29px;
    height: ${(props) => props.$height}px;
    background: repeating-linear-gradient(90deg, #404040 0 1px, transparent 1px 3px);
`;

const ToolGrid = styled.div`
    display: grid;
    grid-template-columns: 46px 46px;
    gap: 2px 3px;
    padding-left: 5px;
`;

const Tool = styled.button`
    width: 46px;
    height: 37px;
    padding: 0px;
    border: none;
    border-radius: 3px;
    background: ${(props) => (props.$active ? '#383838' : 'none')};
    box-shadow: ${(props) => (props.$active ? 'inset 0 0 0 1px #626262' : 'none')};
`;

const Swatches = styled.div`
    position: relative;
    height: 86px;
    margin-left: 7px;
`;

const Swatch = styled.button`
    position: absolute;
    left: ${(props) => props.$x}px;
    top: ${(props) => props.$y}px;
    width: 39px;
    height: 39px;
    padding: 0px;
    border: 2px solid #333;
    background: ${(props) => props.$color};
    box-shadow: ${(props) => (props.$ring ? 'inset 0 0 0 2px #fff' : 'none')};
`;

const SwatchIcon = styled(PlainButton)`
    position: absolute;
    left: ${(props) => props.$x}px;
    top: ${(props) => props.$y}px;
`;

const Document = styled.main`
    display: flex;
    flex-direction: column;
    flex: 1;
    min-width: 0;
`;

const TabBar = styled.div`
    display: flex;
    flex: none;
    height: 44px;
    background: #424242;
    border-bottom: 2px solid #3c3c3c;
`;

const DocumentTab = styled.div`
    display: flex;
    align-items: center;
    gap: 12px;
    padding: 0px 16px 2px 15px;
    background: #535353;
    border-right: 1px solid #383838;
    font-size: 18px;
    white-space: nowrap;
`;

const Viewport = styled.div`
    display: flex;
    flex: 1;
    min-height: 0;
`;

const Stage = styled.div`
    display: flex;
    align-items: center;
    justify-content: center;
    flex: 1;
    background: #282828;
`;

/* 1920 x 1080 at 66.67% */
const Artboard = styled.div`
    width: 72%;
    max-width: 1280px;
    aspect-ratio: 16 / 9;
    background: #fff;
    box-shadow: 0px 4px 8px rgba(0, 0, 0, 0.3);
`;

const VerticalScroll = styled.div`
    display: flex;
    align-items: flex-end;
    justify-content: center;
    width: 24px;
    padding-bottom: 13px;
    background: #4a4a4a;
`;

const StatusBar = styled.footer`
    display: flex;
    flex: none;
    height: 22px;
    background: #4a4a4a;
    line-height: 22px;
`;

const Zoom = styled.input`
    width: 72px;
    padding: 0px 0px 0px 7px;
    border: none;
    background: #464646;
    font-size: 17px;
    line-height: 22px;
`;

const DocumentInfo = styled.div`
    display: flex;
    align-items: center;
    gap: 17px;
    padding: 2px 7px 0px 12px;
    background: #535353;
    border-right: 1px solid #404040;
    color: #e6e6e6;
    font-size: 17px;
    white-space: nowrap;
`;

const ScrollTrack = styled.div`
    display: flex;
    align-items: center;
    flex: 1;
    padding: 3px 12px 0px 13px;
`;

const ScrollSpace = styled.div`
    flex: 43;
`;

const ScrollThumb = styled.div`
    flex: 54;
    height: 18px;
    border-radius: 2px;
    background: #6a6a6a;
`;

const ScrollCorner = styled.div`
    width: 24px;
    background: #535353;
`;

/* floats over the document */
const LayersPanel = styled.section`
    position: absolute;
    top: 145px;
    right: 0px;
    display: flex;
    flex-direction: column;
    width: 423px;
    height: 754px;
    background: #535353;
    border: 1px solid #383838;
    border-right: none;
    border-bottom-width: 2px;
    border-radius: 5px 0px 0px 0px;
    box-shadow: 0px 3px 10px rgba(0, 0, 0, 0.35);
`;

const PanelHeader = styled.div`
    display: flex;
    align-items: center;
    justify-content: flex-end;
    flex: none;
    height: 20px;
    padding-top: 2px;
    background: #424242;
    border-bottom: 2px solid #3a3a3a;
    border-radius: 5px 0px 0px 0px;
`;

const PanelTabs = styled.div`
    display: flex;
    flex: none;
    height: 42px;
    background: #424242;
    box-shadow: inset 0px -2px #3a3a3a;
`;

const PanelTab = styled.button`
    width: 60px;
    padding: 0px 0px 10px;
    border: none;
    border-right: 1px solid #383838;
    background: ${(props) => (props.$active ? '#535353' : 'none')};
    color: ${(props) => (props.$active ? '#fff' : '#b4b4b4')};
    font-size: 17px;
`;

const Row = styled.div`
    display: flex;
    align-items: center;
    flex: none;
    border-bottom: 2px solid #3e3e3e;
`;

const FilterRow = styled(Row)`
    height: 49px;
    padding: 9px 0px 0px 5px;
`;

const FilterIcons = styled.div`
    display: flex;
    gap: 16px;
    margin: 0px 24px 3px 25px;
`;

const FilterSwitch = styled.button`
    width: 13px;
    height: 26px;
    margin-bottom: 2px;
    padding: 0px;
    border: none;
    border-radius: 7px;
    background: radial-gradient(circle at 50% 6px, #a0a0a0 6px, #4a4a4a 7px);
`;

const SearchMark = styled.span`
    position: absolute;
    left: 12px;
    top: 7px;
    pointer-events: none;
`;

const BlendRow = styled(Row)`
    height: 44px;
    padding: 1px 0px 0px 5px;
    gap: 10px;
`;

const LockRow = styled(Row)`
    height: 46px;
    padding: 0px 0px 4px 9px;
    gap: 10px;
    border-bottom: none;
`;

const LockIcons = styled.div`
    display: flex;
    gap: 12px;
    margin: 0px 0px 0px 6px;
`;

const FieldLabel = styled.label`
    color: #a8a8a8;
    font-size: 18px;
    line-height: 26px;
    white-space: nowrap;
`;

const Percent = styled.div`
    display: flex;
    width: 80px;
    height: 27px;
    border: 1px solid #606060;
    border-radius: 4px;
`;

const PercentInput = styled.input`
    width: 50px;
    height: 21px;
    margin: 2px 5px 0px 1px;
    padding: 0px 1px;
    border: none;
    background: #464646;
    color: #969696;
    font-size: 17px;
    line-height: 21px;
`;

const PercentArrow = styled(PlainButton)`
    width: 22px;
    border-left: 1px solid #606060;
`;

const LayerList = styled.div`
    flex: 1;
    background: #4d4d4d;
`;

const LayerRow = styled.div`
    display: flex;
    height: 42px;
    border-bottom: 1px solid #404040;
`;

const Visibility = styled(PlainButton)`
    width: 45px;
    padding: 3px 0px 0px 1px;
    background: #535353;
    border-right: 1px solid #404040;
`;

const LayerBody = styled.div`
    display: flex;
    align-items: center;
    flex: 1;
    padding: 0px 13px 0px 6px;
    background: #6a6a6a;
`;

const Thumbnail = styled.div`
    width: 48px;
    height: 28px;
    border: 1px solid #222;
    background: #fff;
`;

const LayerName = styled.span`
    flex: 1;
    margin-left: 15px;
    padding-bottom: 1px;
    font-size: 17px;
`;

const PanelFooter = styled.div`
    display: flex;
    align-items: center;
    justify-content: flex-end;
    gap: 21px;
    flex: none;
    height: 38px;
    padding: 0px 9px 2px 0px;
    border-top: 2px solid #404040;
`;

const MarkedButton = styled(PlainButton)`
    position: relative;
`;

const EffectButton = styled(MarkedButton)`
    width: 20px;
    color: #a0a0a0;
    font-size: 20px;
    line-height: 20px;
`;

const CaretMark = styled.span`
    position: absolute;
    right: -4px;
    bottom: -2px;
    border: 3px solid transparent;
    border-top-color: ${(props) => props.$color};
    border-bottom: none;
`;

const PanelGrip = styled.div`
    display: flex;
    align-items: center;
    justify-content: center;
    flex: none;
    height: 11px;
    padding-left: 32px;
    border-top: 2px solid #3a3a3a;
`;

const Watermark = styled.span`
    position: absolute;
    right: 15px;
    bottom: 7px;
    color: #dcdcdc;
    font-family: 'Noto Sans CJK SC', sans-serif;
    font-size: 18px;
    line-height: 26px;
    text-shadow: 1px 1px 2px rgba(0, 0, 0, 0.8);
    white-space: nowrap;
`;

export default App;
